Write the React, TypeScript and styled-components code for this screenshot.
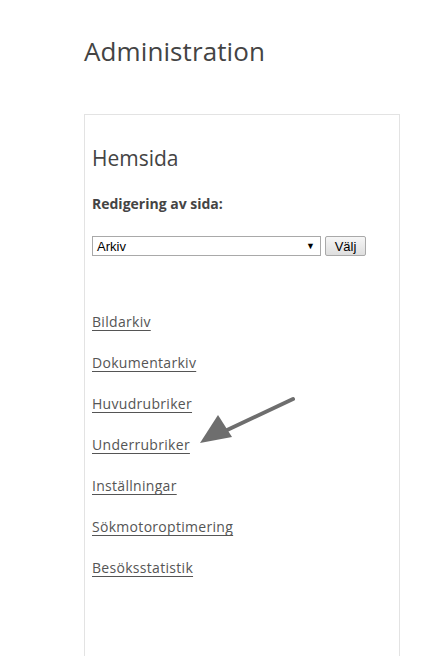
import React from "react";
import styled, { createGlobalStyle } from "styled-components";

const Global = createGlobalStyle`
  html, body { margin: 0; padding: 0; background: #fff; }
  body { font-family: "Open Sans", "Noto Sans", sans-serif; color: #444; }
`;

const Page = styled.div`
  position: relative;
  height: 656px;
  overflow: hidden;
  padding: 0 40px 0 84px;
  box-sizing: border-box;
`;

const Title = styled.h1`
  margin: 0;
  padding-top: 33px;
  font-size: 26px;
  font-weight: 400;
  line-height: 36px;
  color: #444;
  letter-spacing: 0.1px;
`;

const Panel = styled.section`
  margin-top: 45px;
  width: 316px;
  height: 600px;
  box-sizing: border-box;
  border: 1px solid #e3e3e3;
  border-bottom: none;
  padding: 28px 7px 0 7px;
`;

const SectionTitle = styled.h2`
  margin: 0;
  font-size: 21px;
  font-weight: 400;
  line-height: 30px;
  color: #444;
`;

const Label = styled.div`
  margin-top: 21px;
  font-size: 14px;
  font-weight: 700;
  color: #444;
  line-height: 20px;
`;

const Form = styled.div`
  margin-top: 22px;
  display: flex;
  align-items: center;
  gap: 4px;
`;

const SelectBox = styled.div`
  position: relative;
  width: 229px;
  height: 20px;
  box-sizing: border-box;
  border: 1px solid #a9a9a9;
  background: #fff;
  font-family: "Liberation Sans", Arial, sans-serif;
  font-size: 13px;
  color: #000;
  display: flex;
  align-items: center;
  padding-left: 4px;
  justify-content: space-between;
`;

const Caret = styled.span`
  font-size: 9px;
  padding-right: 5px;
  color: #000;
`;

const Button = styled.button`
  height: 20px;
  width: 41px;
  padding: 0;
  box-sizing: border-box;
  border: 1px solid #a9a9a9;
  border-radius: 2px;
  background: linear-gradient(#f6f6f6, #dedede);
  font-family: "Liberation Sans", Arial, sans-serif;
  font-size: 13px;
  color: #000;
`;

const LinkList = styled.nav`
  margin-top: 55px;
  display: flex;
  flex-direction: column;
  gap: 20px;
  align-items: flex-start;
`;

const LinkItem = styled.a`
  font-size: 14px;
  line-height: 21px;
  color: #555;
  text-decoration: underline;
  text-underline-offset: 3px;
  letter-spacing: 0.3px;
`;

const Arrow = styled.svg`
  position: absolute;
  left: 195px;
  top: 393px;
`;

const links = [
  "Bildarkiv",
  "Dokumentarkiv",
  "Huvudrubriker",
  "Underrubriker",
  "Inställningar",
  "Sökmotoroptimering",
  "Besöksstatistik",
];

export default function App() {
  return (
    <Page>
      <Global />
      <Title>Administration</Title>
      <Panel>
        <SectionTitle>Hemsida</SectionTitle>
        <Label>Redigering av sida:</Label>
        <Form>
          <SelectBox>
            <span>Arkiv</span>
            <Caret>▼</Caret>
          </SelectBox>
          <Button>Välj</Button>
        </Form>
        <LinkList>
          {links.map((l) => (
            <LinkItem key={l} href="#">
              {l}
            </LinkItem>
          ))}
        </LinkList>
      </Panel>
      <Arrow width="104" height="60" viewBox="0 0 104 60">
        <line x1="98" y1="6" x2="30" y2="38" stroke="#6e6e6e" strokeWidth="4" strokeLinecap="round" />
        <polygon points="5,50 23,22 37,44" fill="#6e6e6e" />
      </Arrow>
    </Page>
  );
}
